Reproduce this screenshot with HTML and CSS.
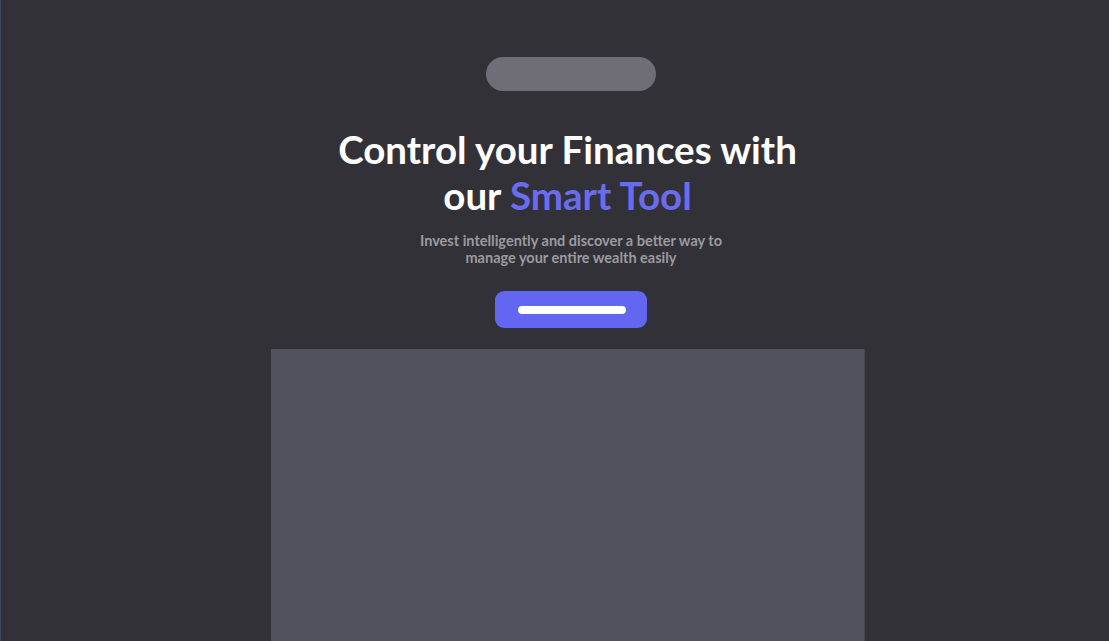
FILE: index.html
```html
<!DOCTYPE html>
<html lang="en">
<head>
<meta charset="utf-8">
<title>Smart Tool</title>
<link rel="stylesheet" href="styles.css">
</head>
<body>
<main class="hero">
  <div class="badge"></div>
  <h1 class="title">Control your Finances with<br>our <span class="accent">Smart Tool</span></h1>
  <p class="subtitle">Invest intelligently and discover a better way to<br>manage your entire wealth easily</p>
  <button class="cta" type="button"><span class="cta-bar"></span></button>
  <div class="preview"></div>
</main>
</body>
</html>
```
FILE: styles.css
```css
html, body {
  margin: 0;
  padding: 0;
  height: 100%;
  overflow: hidden;
}
body {
  background: #323137;
  border-left: 1px solid #3d4660;
  font-family: "Lato", "Open Sans", sans-serif;
  box-sizing: border-box;
}
.hero {
  display: flex;
  flex-direction: column;
  align-items: center;
  padding-left: 32px;
  padding-top: 57px;
  height: 100%;
  box-sizing: border-box;
}
.badge {
  flex: none;
  width: 170px;
  height: 34px;
  border-radius: 17px;
  background: #6f6e76;
}
.title {
  margin: 35px 7px 0 0;
  color: #ffffff;
  font-weight: 700;
  font-size: 38.5px;
  line-height: 46px;
  text-align: center;
}
.accent {
  color: #6a6cf0;
}
.subtitle {
  margin: 14px 0 0;
  color: #9b9aa0;
  font-weight: 700;
  font-size: 14.5px;
  line-height: 17px;
  text-align: center;
}
.cta {
  flex: none;
  margin-top: 25px;
  width: 152px;
  height: 37px;
  border: 0;
  border-radius: 9px;
  background: #6366f1;
  display: flex;
  align-items: center;
  justify-content: center;
  padding: 0 0 0 2px;
}
.cta-bar {
  width: 108px;
  height: 8px;
  border-radius: 4px;
  background: #ffffff;
}
.preview {
  flex: 1;
  margin-top: 21px;
  margin-right: 7px;
  width: 593px;
  background: #52525c;
  border-right: 1px solid #47474f;
}
```
